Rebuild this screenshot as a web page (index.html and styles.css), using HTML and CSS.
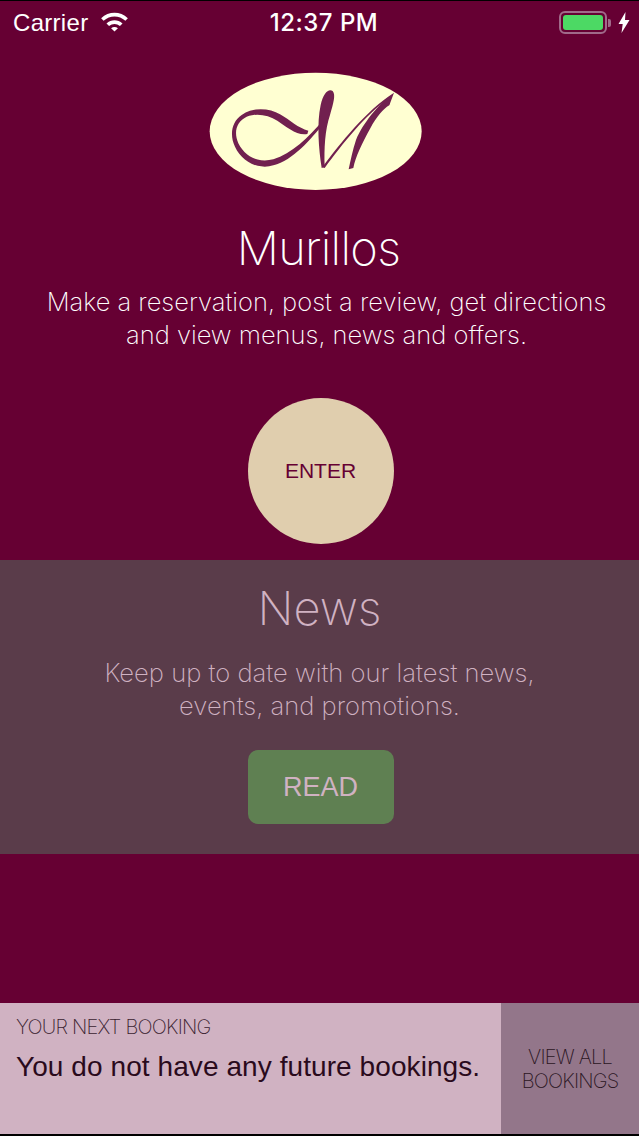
FILE: index.html
```html
<!DOCTYPE html>
<html lang="en">
<head>
<meta charset="utf-8">
<title>Murillos</title>
<link rel="stylesheet" href="styles.css">
</head>
<body>
<div class="screen">
  <header class="status">
    <div class="status-left">
      <span>Carrier</span>
      <svg class="wifi" viewBox="0 0 30 22" width="29" height="21"><path d="M1 7.5C9 0 21 0 29 7.5l-2.6 2.7C19.8 4.2 10.2 4.2 3.6 10.2z" fill="#fff"/><path d="M6.6 13C11.6 8.6 18.4 8.6 23.4 13l-2.7 2.8C17.2 12.8 12.8 12.8 9.3 15.8z" fill="#fff"/><path d="M11.4 18C13.6 16.2 16.4 16.2 18.6 18L15 21.6z" fill="#fff"/></svg>
    </div>
    <div class="status-time">12:37 PM</div>
    <div class="status-right">
      <span class="battery"><span class="battery-fill"></span></span>
      <span class="battery-tip"></span>
      <svg class="bolt" viewBox="0 0 12 21" width="12" height="21"><path d="M7.5 0L0.5 12h4.2L3.5 21l8-13H7z" fill="#fff"/></svg>
    </div>
  </header>

  <section class="hero">
    <svg class="logo" viewBox="0 0 750 435" width="250" height="145">
      <ellipse cx="377" cy="214" rx="318" ry="176" fill="#ffffd2"/>
      <g fill="#71204f">
        <path d="M355 212C325 205 300 180 270 163C240 145 190 140 155 165C125 185 118 225 135 260C155 305 205 330 250 316C310 300 360 240 405 185L400 180C355 232 305 282 250 298C205 310 165 290 145 250C130 215 140 185 170 170C200 158 235 165 262 182C290 200 320 228 352 222Z"/>
        <path d="M428 93C415 85 400 100 392 135C380 190 386 265 395 324L404 320C402 265 405 210 420 165C430 130 438 105 428 93Z"/>
        <path d="M397 322C450 250 530 150 612 98L598 136L594 118C530 160 455 255 404 324Z"/>
        <path d="M600 108C565 135 518 190 498 240C488 270 482 300 476 328L490 324C497 290 516 250 541 205C559 170 582 145 598 136Z"/>
      </g>
    </svg>
    <h1 class="hero-title">Murillos</h1>
    <p class="hero-text">Make a reservation, post a review, get directions<br>and view menus, news and offers.</p>
    <button class="enter">ENTER</button>
  </section>

  <section class="news">
    <h2 class="news-title">News</h2>
    <p class="news-text">Keep up to date with our latest news,<br>events, and promotions.</p>
    <button class="read">READ</button>
  </section>

  <div class="spacer"></div>

  <footer class="booking">
    <div class="booking-main">
      <div class="booking-label">YOUR NEXT BOOKING</div>
      <div class="booking-text">You do not have any future bookings.</div>
    </div>
    <div class="booking-all">VIEW ALL<br>BOOKINGS</div>
  </footer>
</div>
</body>
</html>
```
FILE: styles.css
```css
* { box-sizing: border-box; }
html, body { margin: 0; padding: 0; }
body { background: #000; }
.screen {
  width: 639px;
  height: 1136px;
  background: #603;
  border-top: 1px solid #000;
  border-bottom: 2px solid #000;
  display: flex;
  flex-direction: column;
  font-family: "Inter", "Liberation Sans", sans-serif;
  overflow: hidden;
}
.status {
  height: 43px;
  flex: none;
  display: grid;
  grid-template-columns: 1fr auto 1fr;
  align-items: center;
  padding: 0 9px 0 13px;
  color: #fff;
  font-family: "Liberation Sans", sans-serif;
}
.status-left { display: flex; align-items: center; gap: 12px; font-size: 24px; letter-spacing: 0.3px; }
.wifi { margin-top: -3px; }
.status-time { font: 500 24px "Inter", sans-serif; letter-spacing: 0.5px; margin-left: 5px; }
.status-right { display: flex; align-items: center; justify-content: flex-end; }
.battery {
  width: 48px;
  height: 23px;
  border: 2px solid #a06a8a;
  border-radius: 6px;
  padding: 2px;
  display: flex;
}
.battery-fill { flex: 1; background: #4cd964; border-radius: 3px; }
.battery-tip { width: 3px; height: 8px; margin-left: 1px; background: #a06a8a; border-radius: 0 2px 2px 0; }
.bolt { margin-left: 7px; }

.hero {
  flex: none;
  height: 516px;
  display: flex;
  flex-direction: column;
  align-items: center;
  color: #fff;
}
.logo { margin-top: 16px; margin-left: -9px; flex: none; filter: blur(0.7px); }
.hero-title {
  margin: 13px 0 0 -2px;
  font-size: 47px;
  line-height: 60px;
  font-weight: 200;
  letter-spacing: -0.7px;
}
.hero-text {
  margin: 7px 0 0 14px;
  font-size: 25.5px;
  line-height: 33px;
  font-weight: 200;
  text-align: center;
  color: #fff;
}
.enter {
  margin: 47px 0 0 2px;
  width: 146px;
  height: 146px;
  border: 0;
  border-radius: 50%;
  background: #e0ceae;
  color: #603;
  font: 400 21px "Liberation Sans", sans-serif;
}

.news {
  flex: none;
  height: 294px;
  background: #5a3c4a;
  display: flex;
  flex-direction: column;
  align-items: center;
  color: #d0b2c2;
}
.news-title {
  margin: 18px 0 0;
  font-size: 47px;
  line-height: 60px;
  font-weight: 200;
}
.news-text {
  margin: 18px 0 0;
  font-size: 25.6px;
  line-height: 33px;
  font-weight: 200;
  text-align: center;
}
.read {
  margin: 28px 0 0 2px;
  width: 146px;
  height: 74px;
  border: 0;
  border-radius: 10px;
  background: #5f8052;
  color: #d0b2c2;
  font: 400 27px "Liberation Sans", sans-serif;
}
.spacer { flex: 1; }
.booking {
  flex: none;
  height: 131px;
  display: flex;
}
.booking-main {
  width: 501px;
  background: #d0b2c2;
  padding: 12px 0 0 16px;
  color: #2a0a1c;
}
.booking-label { font-size: 20px; line-height: 24px; font-weight: 200; color: #3a2230; letter-spacing: -0.8px; }
.booking-text { margin-top: 12px; font: 400 28px/32px "Liberation Sans", sans-serif; letter-spacing: 0.08px; }
.booking-all {
  flex: 1;
  background: #93768a;
  display: flex;
  align-items: center;
  justify-content: center;
  text-align: center;
  font-size: 20px;
  line-height: 24px;
  font-weight: 200;
  color: #2a1522;
  letter-spacing: -0.8px;
}
```
